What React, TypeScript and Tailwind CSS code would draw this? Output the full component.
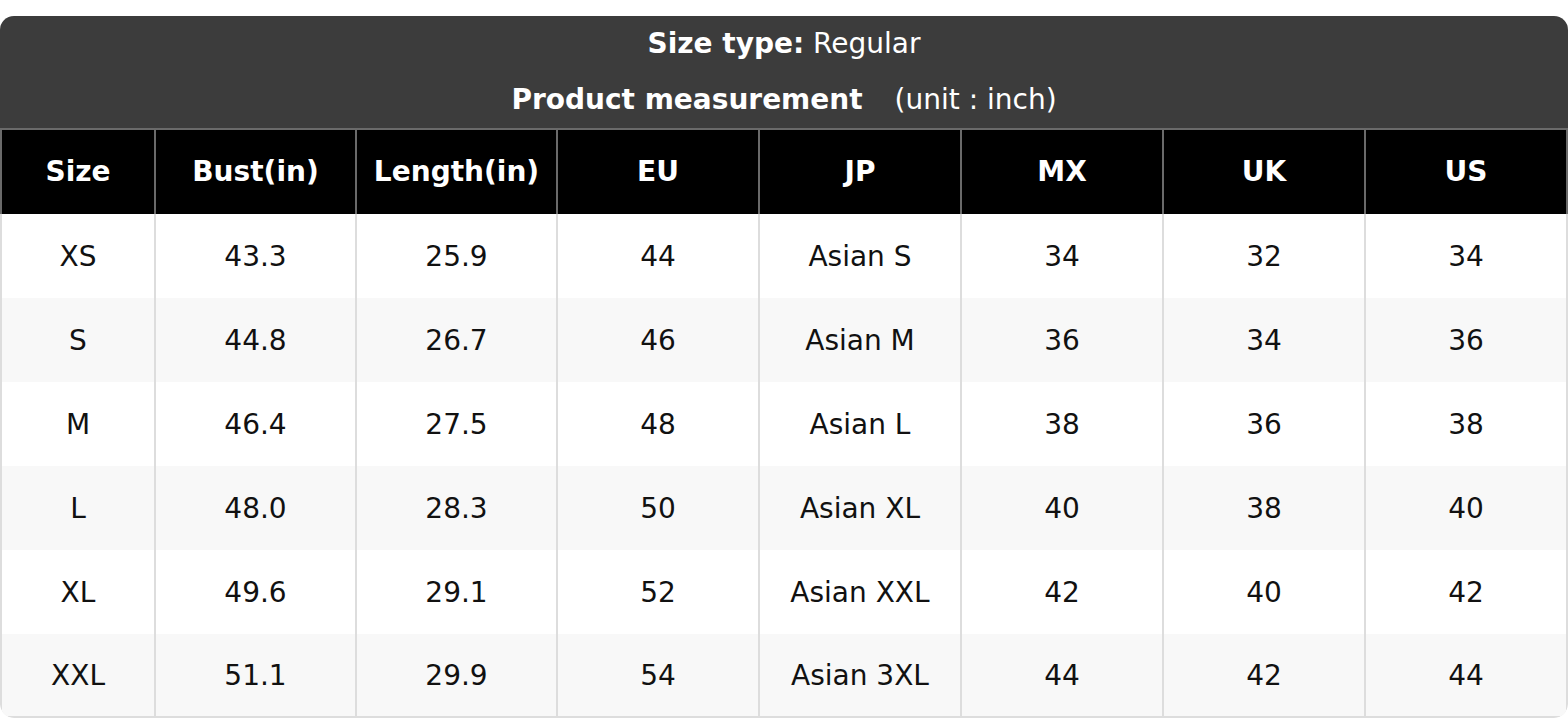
import React from "react";

const headers = ["Size", "Bust(in)", "Length(in)", "EU", "JP", "MX", "UK", "US"];
const rows = [
  ["XS", "43.3", "25.9", "44", "Asian S", "34", "32", "34"],
  ["S", "44.8", "26.7", "46", "Asian M", "36", "34", "36"],
  ["M", "46.4", "27.5", "48", "Asian L", "38", "36", "38"],
  ["L", "48.0", "28.3", "50", "Asian XL", "40", "38", "40"],
  ["XL", "49.6", "29.1", "52", "Asian XXL", "42", "40", "42"],
  ["XXL", "51.1", "29.9", "54", "Asian 3XL", "44", "42", "44"],
];

export default function App() {
  return (
    <div className="w-[1568px] h-[720px] bg-white pt-4" style={{ fontFamily: "'DejaVu Sans', 'Liberation Sans', sans-serif" }}>
      <div className="rounded-[14px] overflow-hidden">
        <div className="bg-[#3c3c3c] text-white text-[28px] text-center">
          <div className="h-[56px] flex items-center justify-center">
            <span className="font-bold">Size type:</span>
            <span>&nbsp;Regular</span>
          </div>
          <div className="h-[56px] flex items-center justify-center">
            <span className="font-bold">Product measurement</span>
            <span className="ml-[32px]">(unit : inch)</span>
          </div>
        </div>
        <div className="border-t-2 border-[#6a6a6a] bg-black">
          <div className="grid grid-cols-[152px_201px_201px_202px_202px_202px_202px_1fr] border-x-2 border-[#6a6a6a]">
            {headers.map((h, i) => (
              <div
                key={h}
                className={`h-[84px] flex items-center justify-center text-white font-bold text-[28px] ${i > 0 ? "border-l-2 border-[#6a6a6a]" : ""}`}
              >
                {h}
              </div>
            ))}
          </div>
        </div>
        <div className="border-x-2 border-b-2 border-[#dddddd] rounded-b-[14px]">
          {rows.map((r, ri) => (
            <div
              key={ri}
              className={`grid grid-cols-[152px_201px_201px_202px_202px_202px_202px_1fr] ${ri % 2 === 1 ? "bg-[#f8f8f8]" : "bg-white"}`}
            >
              {r.map((c, ci) => (
                <div
                  key={ci}
                  className={`${ri === rows.length - 1 ? "h-[82px]" : "h-[84px]"} pt-[2px] flex items-center justify-center text-[#111111] text-[28px] ${ci > 0 ? "border-l-2 border-[#dddddd]" : ""}`}
                >
                  {c}
                </div>
              ))}
            </div>
          ))}
        </div>
      </div>
    </div>
  );
}
